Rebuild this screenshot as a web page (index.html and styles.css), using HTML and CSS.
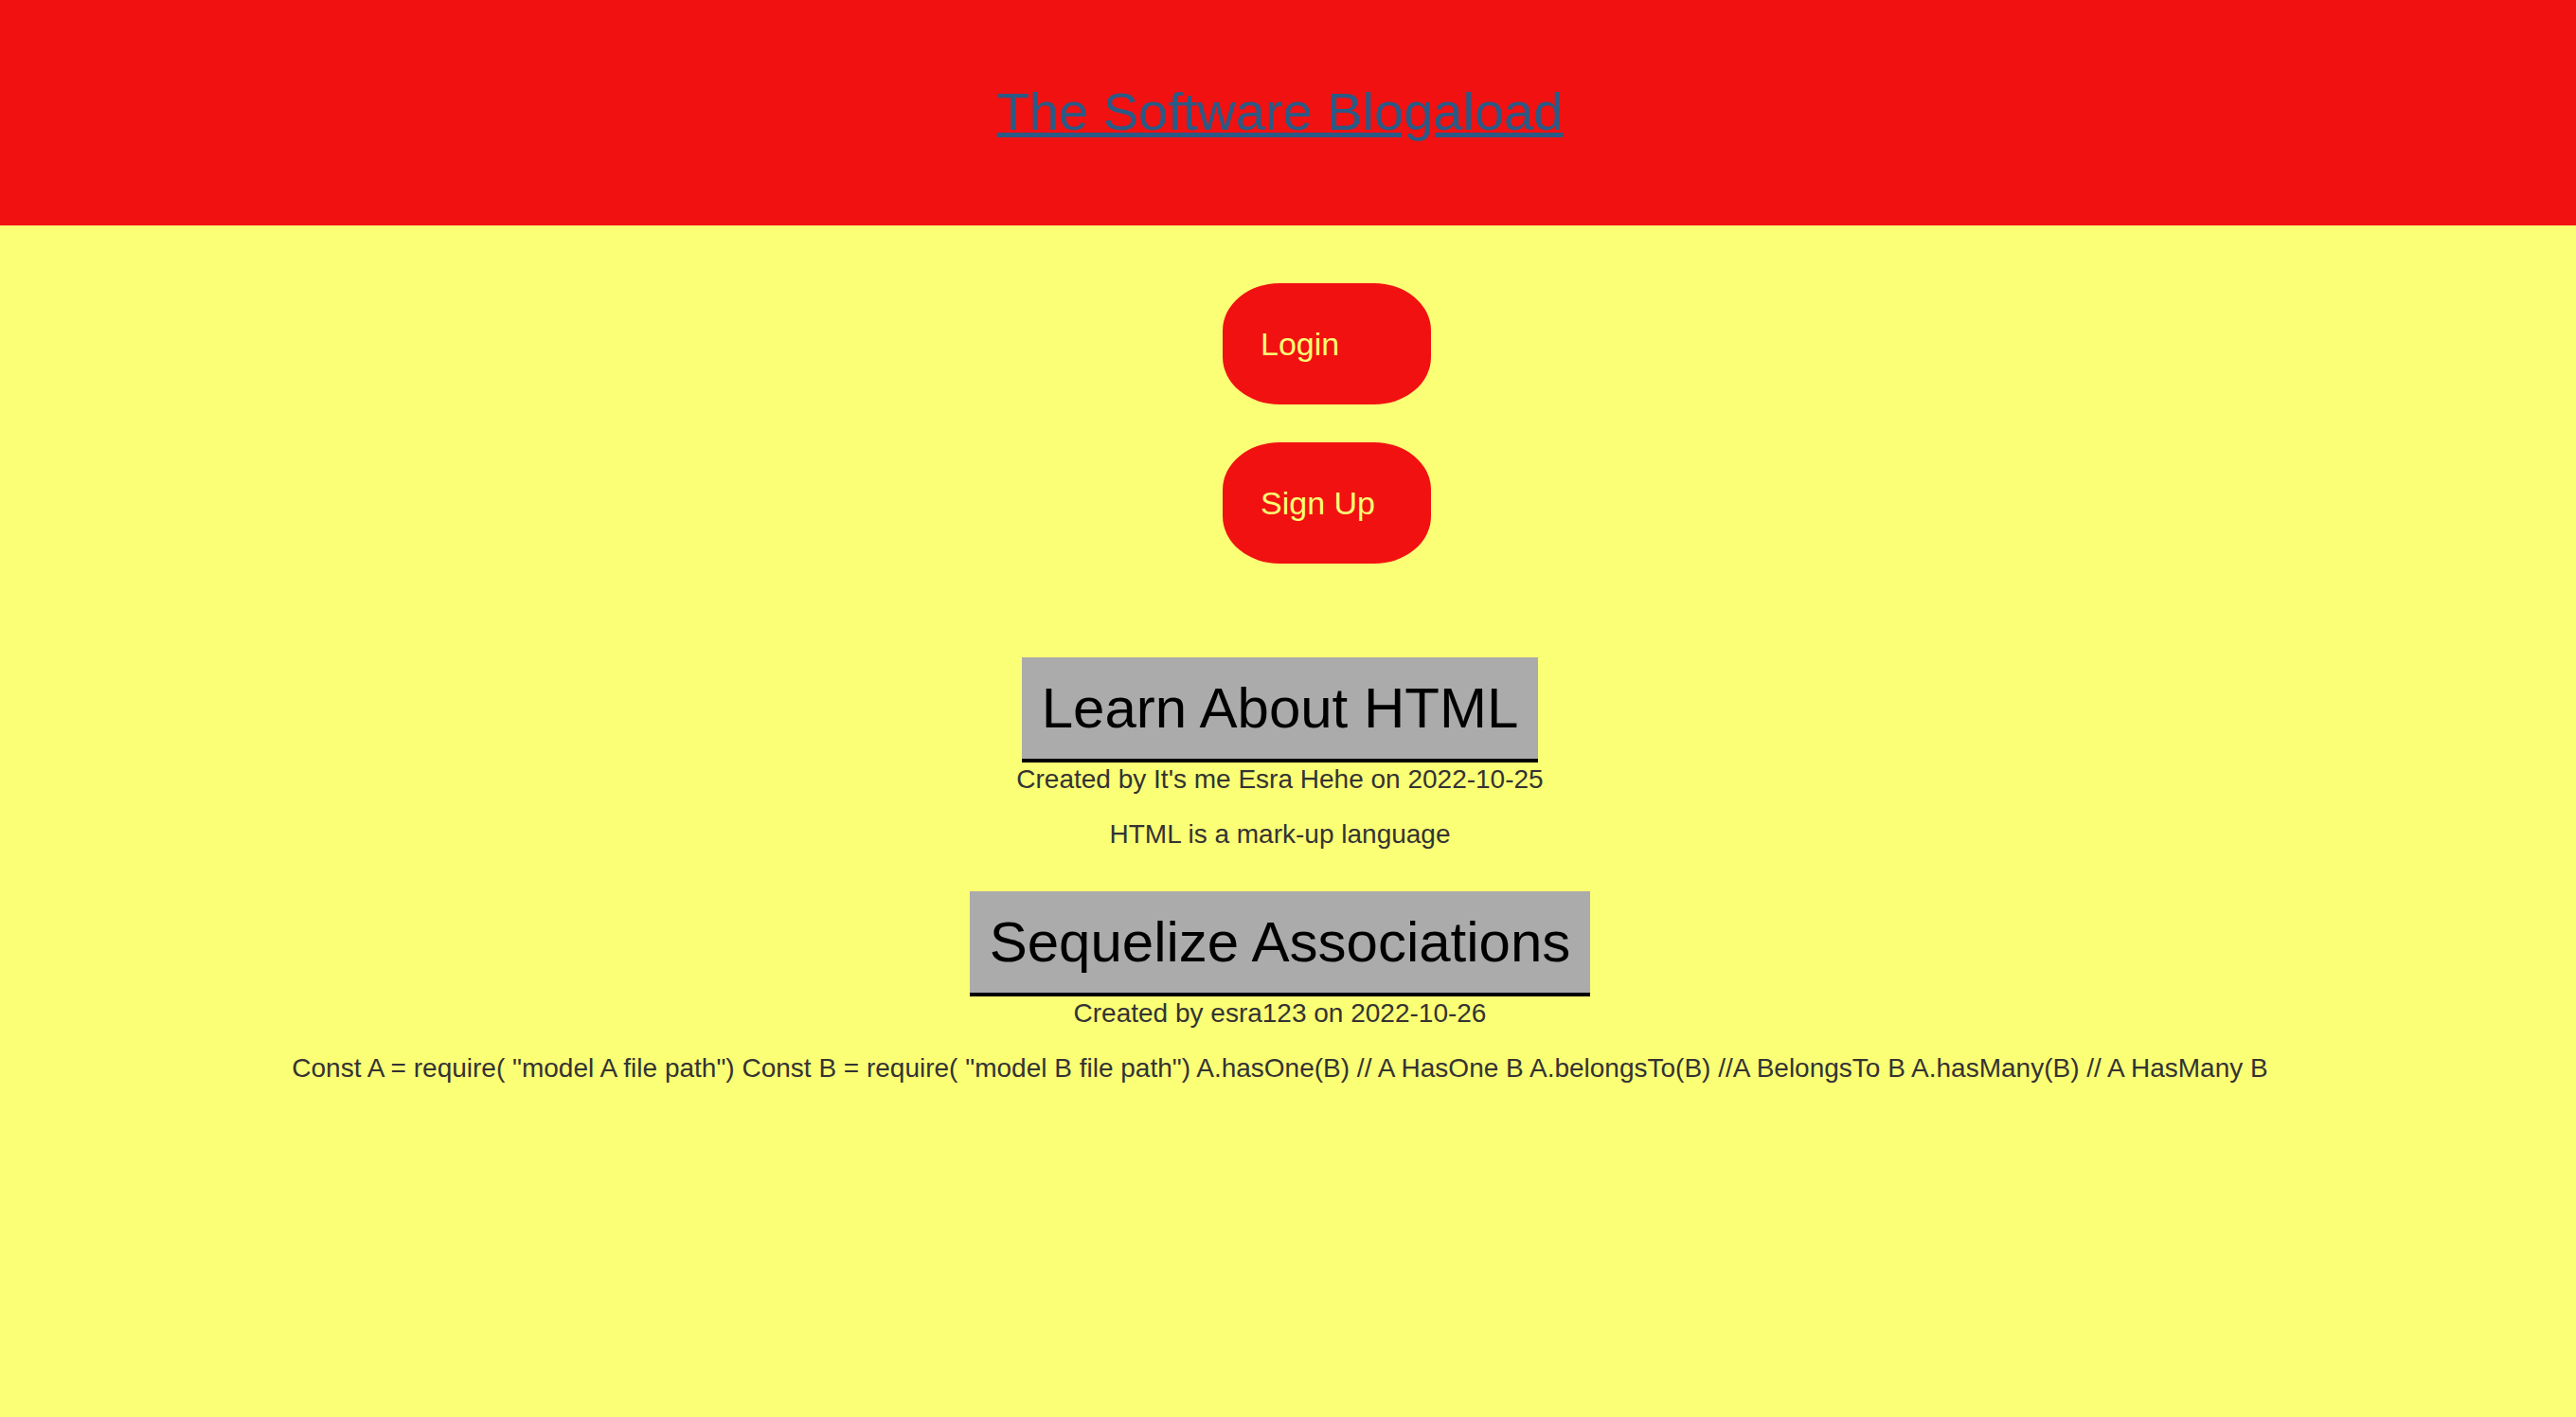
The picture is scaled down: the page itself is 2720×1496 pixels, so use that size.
FILE: index.html
```html
<!DOCTYPE html>
<html lang="en">
<head>
<meta charset="utf-8">
<title>The Software Blogaload</title>
<link rel="stylesheet" href="styles.css">
</head>
<body>
<header class="site-header">
  <h1 class="site-title"><a href="#">The Software Blogaload</a></h1>
</header>
<nav class="auth">
  <a class="auth-btn" href="#">Login</a>
  <a class="auth-btn" href="#">Sign Up</a>
</nav>
<main class="posts">
  <article class="post">
    <h2 class="post-title">Learn About HTML</h2>
    <p class="post-meta">Created by It's me Esra Hehe on 2022-10-25</p>
    <p class="post-body">HTML is a mark-up language</p>
  </article>
  <article class="post">
    <h2 class="post-title">Sequelize Associations</h2>
    <p class="post-meta">Created by esra123 on 2022-10-26</p>
    <p class="post-body">Const A = require( "model A file path") Const B = require( "model B file path") A.hasOne(B) // A HasOne B A.belongsTo(B) //A BelongsTo B A.hasMany(B) // A HasMany B</p>
  </article>
</main>
</body>
</html>
```
FILE: styles.css
```css
html, body {
  margin: 0;
  padding: 0;
}

body {
  background: #fbff75;
  font-family: "Liberation Sans", Arial, sans-serif;
  color: #333333;
  min-height: 1496px;
}

.site-header {
  height: 238px;
  background: #f21111;
  display: flex;
  justify-content: center;
  align-items: center;
  padding-right: 17px;
  padding-bottom: 3px;
  box-sizing: border-box;
}

.site-title {
  margin: 0;
  font-size: 56px;
  line-height: 64px;
  font-weight: 400;
}

.site-title a {
  color: #2a5a86;
  text-decoration: underline;
}

.auth {
  display: flex;
  flex-direction: column;
  align-items: center;
  gap: 40px;
  padding-top: 61px;
  padding-right: 17px;
}

.auth-btn {
  box-sizing: border-box;
  width: 220px;
  height: 128px;
  margin-left: 99px;
  padding-left: 40px;
  border-radius: 60px / 50px;
  background: #f21111;
  color: #fbff75;
  font-size: 34px;
  text-decoration: none;
  display: flex;
  align-items: center;
}

.posts {
  margin-top: 99px;
  padding-right: 17px;
  display: flex;
  flex-direction: column;
  align-items: center;
  gap: 44px;
  text-align: center;
}

.post {
  display: flex;
  flex-direction: column;
  align-items: center;
}

.post-title {
  margin: 0;
  padding: 19px 21px;
  background: #ababab;
  border-bottom: 4px solid #000000;
  color: #000000;
  font-size: 60px;
  line-height: 69px;
  font-weight: 400;
}

.post-meta {
  margin: 2px 0 0;
  font-size: 28px;
  line-height: 32px;
}

.post-body {
  margin: 26px 0 0;
  font-size: 28px;
  line-height: 32px;
}
```
